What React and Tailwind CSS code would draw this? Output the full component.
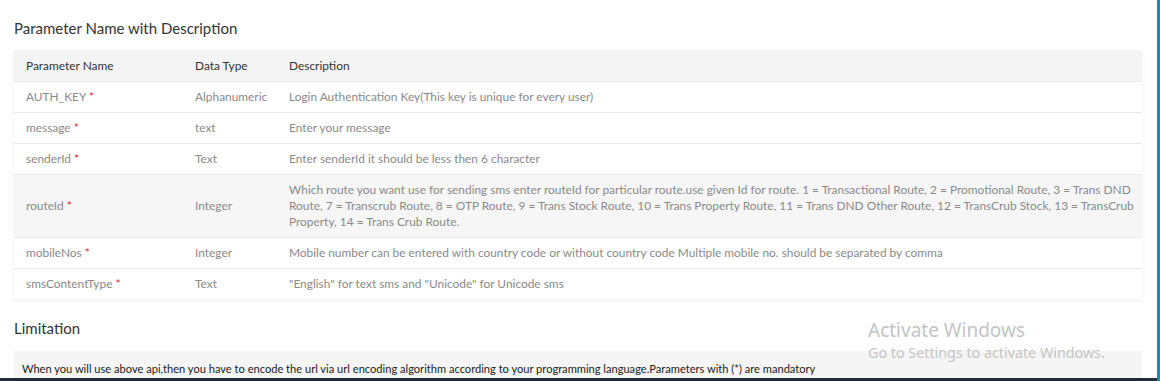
import React from "react";

const params = [
  {
    name: "AUTH_KEY",
    type: "Alphanumeric",
    desc: "Login Authentication Key(This key is unique for every user)",
  },
  { name: "message", type: "text", desc: "Enter your message" },
  {
    name: "senderId",
    type: "Text",
    desc: "Enter senderId it should be less then 6 character",
  },
  {
    name: "routeId",
    type: "Integer",
    desc: "Which route you want use for sending sms enter routeId for particular route.use given Id for route. 1 = Transactional Route, 2 = Promotional Route, 3 = Trans DND Route, 7 = Transcrub Route, 8 = OTP Route, 9 = Trans Stock Route, 10 = Trans Property Route, 11 = Trans DND Other Route, 12 = TransCrub Stock, 13 = TransCrub Property, 14 = Trans Crub Route.",
    shaded: true,
  },
  {
    name: "mobileNos",
    type: "Integer",
    desc: "Mobile number can be entered with country code or without country code Multiple mobile no. should be separated by comma",
  },
  {
    name: "smsContentType",
    type: "Text",
    desc: '"English" for text sms and "Unicode" for Unicode sms',
  },
];

export default function App() {
  return (
    <div className="relative flex h-[381px] w-[1160px] overflow-hidden bg-white font-['Lato','Liberation_Sans',sans-serif]">
      <div className="flex flex-1 flex-col">
        <div className="flex-1 overflow-hidden pl-[14px] pr-[15px]">
          {/* Parameters */}
          <h2 className="pt-[19px] text-[15px] leading-[18px] text-[#333]">
            Parameter Name with Description
          </h2>
          <div className="mt-[13px] shadow-[0_2px_6px_rgba(0,0,0,0.06)]">
            <table className="w-full table-fixed border-collapse text-[11.9px] leading-[16px]">
              <colgroup>
                <col className="w-[169px]" />
                <col className="w-[94px]" />
                <col />
              </colgroup>
              <thead>
                <tr className="bg-[#f4f4f4] text-[#333]">
                  <th className="px-[12px] pt-[8px] pb-[7px] text-left font-normal">Parameter Name</th>
                  <th className="px-[12px] pt-[8px] pb-[7px] text-left font-normal">Data Type</th>
                  <th className="pl-[12px] pr-[6px] pt-[8px] pb-[7px] text-left font-normal">Description</th>
                </tr>
              </thead>
              <tbody className="text-[#8a8a8a]">
                {params.map((p) => (
                  <tr
                    key={p.name}
                    className={`border-t border-[#e9e9e9] ${p.shaded ? "bg-[#f5f6f5]" : "bg-white"}`}
                  >
                    <td className="px-[12px] py-[7px] align-middle">
                      {p.name} <span className="text-[#e4202a]">*</span>
                    </td>
                    <td className="px-[12px] py-[7px] align-middle">{p.type}</td>
                    <td className="pl-[12px] pr-[6px] py-[7px] align-middle">{p.desc}</td>
                  </tr>
                ))}
              </tbody>
            </table>
          </div>

          {/* Limitation */}
          <h2 className="mt-[20px] text-[15px] leading-[18px] text-[#333]">Limitation</h2>
          <div className="mt-[14px] bg-[#f5f5f5] px-[8px] pt-[10px] pb-[10px] text-[11.1px] leading-[16px] text-[#222]">
            When you will use above api,then you have to encode the url via url encoding algorithm according to your programming language.Parameters with (*) are mandatory
          </div>
        </div>
        <div className="h-[3px] bg-[#1f2c39]" />
      </div>
      <div className="w-[3px] bg-[#0b8bc9]" />

      {/* Windows watermark */}
      <div className="pointer-events-none absolute left-[868px] top-[318px] font-['Noto_Sans','Open_Sans',sans-serif] text-[#c4c4c4]">
        <div className="text-[19px] leading-[25px]">Activate Windows</div>
        <div className="text-[14.3px] leading-[19px]">Go to Settings to activate Windows.</div>
      </div>
    </div>
  );
}
